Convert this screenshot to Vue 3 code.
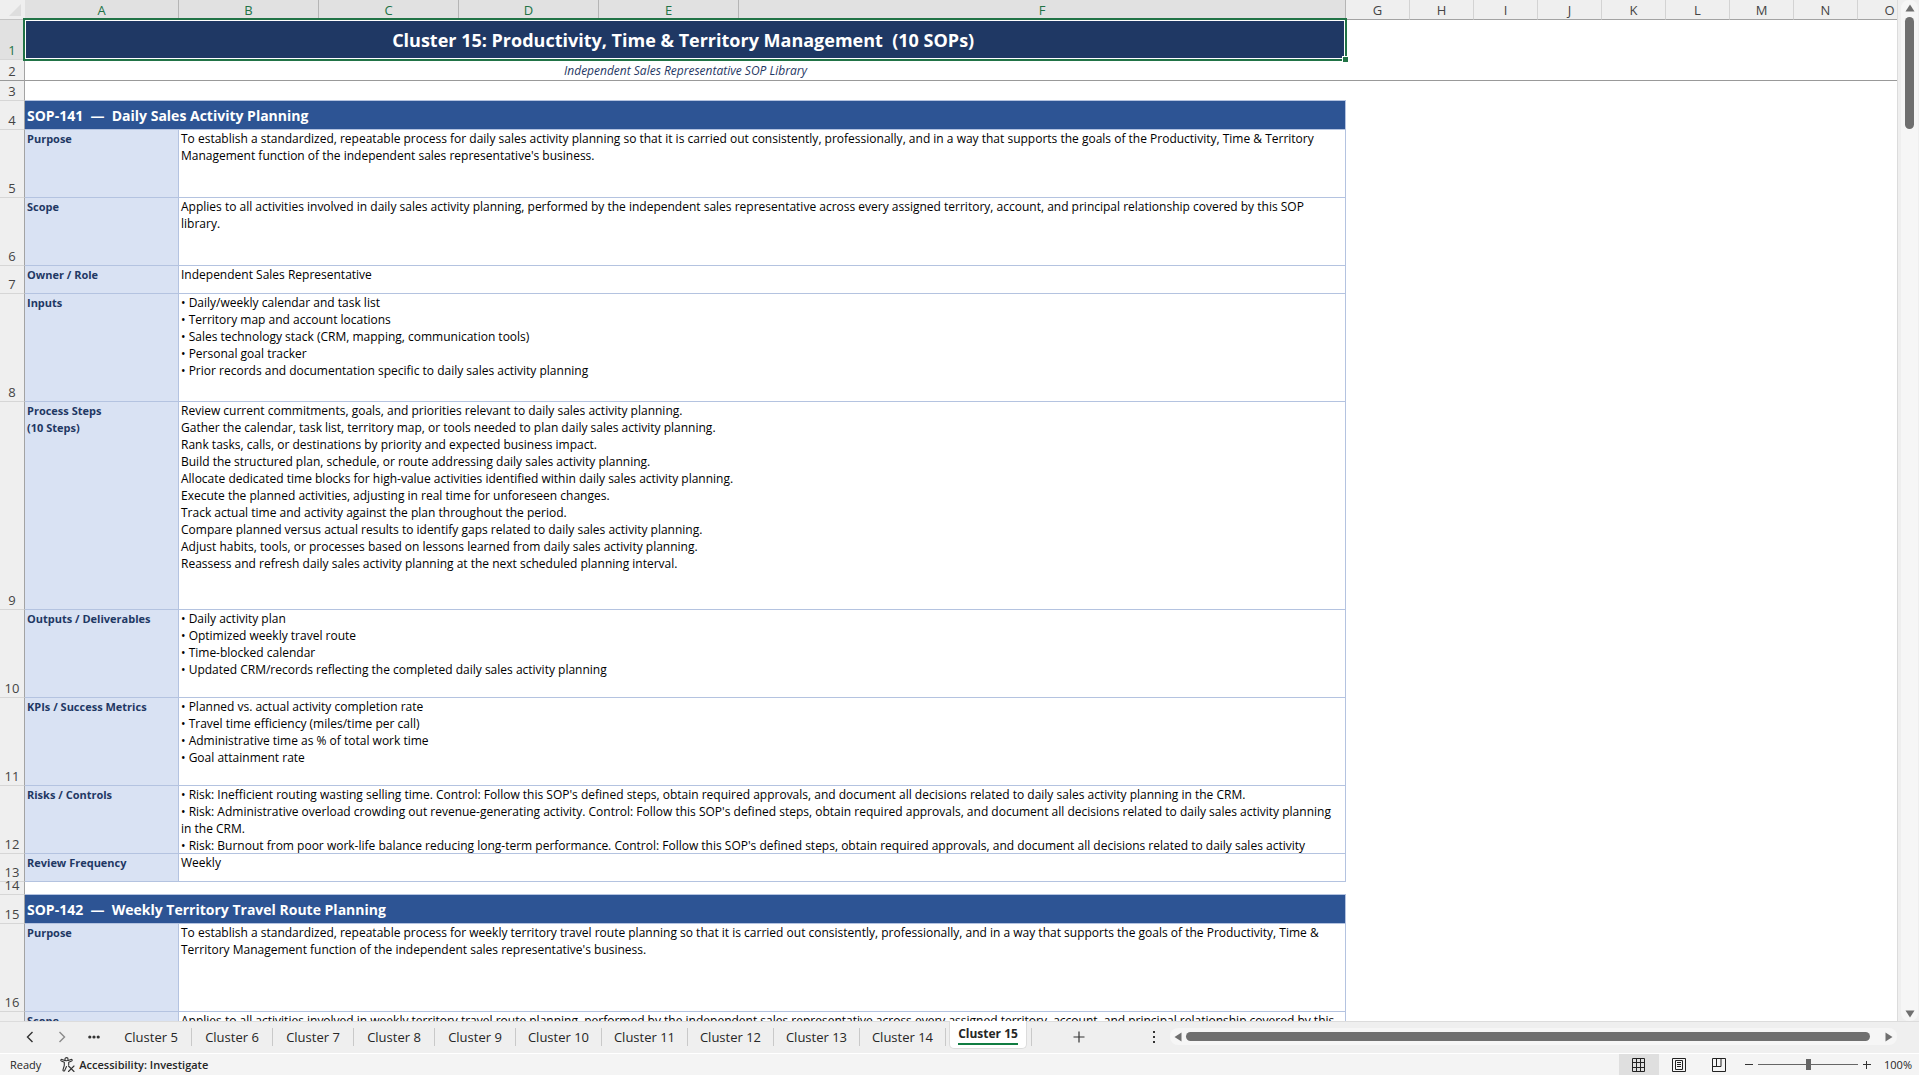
<script setup>
import { ref } from 'vue'

const selectedColumns = ['A', 'B', 'C', 'D', 'E', 'F']
const otherColumns = ['G', 'H', 'I', 'J', 'K', 'L', 'M', 'N', 'O']

const rows = [
  { n: 1, h: 40, kind: 'title', text: 'Cluster 15: Productivity, Time & Territory Management  (10 SOPs)' },
  { n: 2, h: 21, kind: 'subtitle', text: 'Independent Sales Representative SOP Library' },
  { n: 3, h: 20, kind: 'blank' },
  { n: 4, h: 29, kind: 'section', text: 'SOP-141  —  Daily Sales Activity Planning' },
  {
    n: 5, h: 68, kind: 'field', label: 'Purpose', lines: [
      'To establish a standardized, repeatable process for daily sales activity planning so that it is carried out consistently, professionally, and in a way that supports the goals of the Productivity, Time & Territory',
      "Management function of the independent sales representative's business.",
    ],
  },
  {
    n: 6, h: 68, kind: 'field', label: 'Scope', lines: [
      'Applies to all activities involved in daily sales activity planning, performed by the independent sales representative across every assigned territory, account, and principal relationship covered by this SOP',
      'library.',
    ],
  },
  { n: 7, h: 28, kind: 'field', label: 'Owner / Role', lines: ['Independent Sales Representative'] },
  {
    n: 8, h: 108, kind: 'field', label: 'Inputs', lines: [
      '• Daily/weekly calendar and task list',
      '• Territory map and account locations',
      '• Sales technology stack (CRM, mapping, communication tools)',
      '• Personal goal tracker',
      '• Prior records and documentation specific to daily sales activity planning',
    ],
  },
  {
    n: 9, h: 208, kind: 'field', label: 'Process Steps\n(10 Steps)', lines: [
      'Review current commitments, goals, and priorities relevant to daily sales activity planning.',
      'Gather the calendar, task list, territory map, or tools needed to plan daily sales activity planning.',
      'Rank tasks, calls, or destinations by priority and expected business impact.',
      'Build the structured plan, schedule, or route addressing daily sales activity planning.',
      'Allocate dedicated time blocks for high-value activities identified within daily sales activity planning.',
      'Execute the planned activities, adjusting in real time for unforeseen changes.',
      'Track actual time and activity against the plan throughout the period.',
      'Compare planned versus actual results to identify gaps related to daily sales activity planning.',
      'Adjust habits, tools, or processes based on lessons learned from daily sales activity planning.',
      'Reassess and refresh daily sales activity planning at the next scheduled planning interval.',
    ],
  },
  {
    n: 10, h: 88, kind: 'field', label: 'Outputs / Deliverables', lines: [
      '• Daily activity plan',
      '• Optimized weekly travel route',
      '• Time-blocked calendar',
      '• Updated CRM/records reflecting the completed daily sales activity planning',
    ],
  },
  {
    n: 11, h: 88, kind: 'field', label: 'KPIs / Success Metrics', lines: [
      '• Planned vs. actual activity completion rate',
      '• Travel time efficiency (miles/time per call)',
      '• Administrative time as % of total work time',
      '• Goal attainment rate',
    ],
  },
  {
    n: 12, h: 68, kind: 'field', label: 'Risks / Controls', lines: [
      "• Risk: Inefficient routing wasting selling time. Control: Follow this SOP's defined steps, obtain required approvals, and document all decisions related to daily sales activity planning in the CRM.",
      "• Risk: Administrative overload crowding out revenue-generating activity. Control: Follow this SOP's defined steps, obtain required approvals, and document all decisions related to daily sales activity planning",
      'in the CRM.',
      "• Risk: Burnout from poor work-life balance reducing long-term performance. Control: Follow this SOP's defined steps, obtain required approvals, and document all decisions related to daily sales activity",
    ],
  },
  { n: 13, h: 28, kind: 'field', label: 'Review Frequency', lines: ['Weekly'] },
  { n: 14, h: 13, kind: 'blank' },
  { n: 15, h: 29, kind: 'section', text: 'SOP-142  —  Weekly Territory Travel Route Planning' },
  {
    n: 16, h: 88, kind: 'field', label: 'Purpose', lines: [
      'To establish a standardized, repeatable process for weekly territory travel route planning so that it is carried out consistently, professionally, and in a way that supports the goals of the Productivity, Time &',
      "Territory Management function of the independent sales representative's business.",
    ],
  },
  {
    n: 17, h: 68, kind: 'field', label: 'Scope', lines: [
      'Applies to all activities involved in weekly territory travel route planning, performed by the independent sales representative across every assigned territory, account, and principal relationship covered by this',
    ],
  },
]

const tabs = [5, 6, 7, 8, 9, 10, 11, 12, 13, 14, 15]
const activeTab = ref(15)
const zoom = ref(100)
</script>

<template>
  <div class="app">
    <main class="workspace">
      <div class="sheet">
        <table class="grid">
          <colgroup>
            <col class="w-head" />
            <col class="w-a" />
            <col v-for="c in 4" :key="c" class="w-mid" />
            <col class="w-f" />
            <col v-for="c in otherColumns" :key="c" class="w-std" />
            <col />
          </colgroup>
          <thead>
            <tr>
              <th class="corner"><svg width="25" height="19" viewBox="0 0 25 19"><path d="M21 4v12H9z" fill="#dedede" /></svg></th>
              <th v-for="c in selectedColumns" :key="c" class="col-head selected" scope="col">{{ c }}</th>
              <th v-for="c in otherColumns" :key="c" class="col-head" scope="col">{{ c }}</th>
              <th class="col-head"></th>
            </tr>
          </thead>
          <tbody>
            <tr v-for="row in rows" :key="row.n" :class="row.kind">
              <th class="row-head" :class="{ selected: row.n === 1 }" scope="row">
                <div class="row-number" :style="{ height: row.h - 1 + 'px' }">{{ row.n }}</div>
              </th>
              <template v-if="row.kind === 'field'">
                <td class="label"><div class="content" :style="{ height: row.h - 1 + 'px' }">{{ row.label }}</div></td>
                <td class="value" colspan="5"><div class="content" :style="{ height: row.h - 1 + 'px' }">{{ row.lines.join('\n') }}</div></td>
              </template>
              <td v-else class="merged" colspan="6">
                {{ row.text }}
                <div v-if="row.n === 1" class="selection"><i class="handle"></i></div>
              </td>
              <td class="empty" colspan="10"></td>
            </tr>
          </tbody>
        </table>
      </div>
      <div class="v-gutter">
        <div class="v-track">
          <svg width="10" height="8" viewBox="0 0 10 8"><path d="M5 .5 9.500 7.500H.5z" fill="#6f6f6f" /></svg>
          <div class="v-thumb"></div>
          <svg class="end" width="10" height="8" viewBox="0 0 10 8"><path d="M5 7.500 9.500.5H.5z" fill="#6f6f6f" /></svg>
        </div>
      </div>
    </main>

    <nav class="tab-bar">
      <div class="tab-nav">
        <button type="button" aria-label="Previous sheets"><svg width="12" height="12" viewBox="0 0 12 12"><path d="M8.500 1 3.500 6l5 5" fill="none" stroke="#333" stroke-width="1.400" /></svg></button>
        <button type="button" aria-label="Next sheets"><svg width="12" height="12" viewBox="0 0 12 12"><path d="M3.500 1l5 5-5 5" fill="none" stroke="#8a8a8a" stroke-width="1.400" /></svg></button>
        <button type="button" aria-label="All sheets"><svg width="12" height="12" viewBox="0 0 12 12" fill="#333"><circle cx="1.800" cy="6" r="1.600" /><circle cx="6" cy="6" r="1.600" /><circle cx="10.200" cy="6" r="1.600" /></svg></button>
      </div>
      <button
        v-for="t in tabs"
        :key="t"
        type="button"
        class="tab"
        :class="{ wide: t > 9, active: t === activeTab }"
        @click="activeTab = t"
      ><span>Cluster {{ t }}</span></button>
      <button type="button" class="add" aria-label="New sheet"><svg width="12" height="12" viewBox="0 0 12 12"><path d="M6 .5v11M.5 6h11" stroke="#333" stroke-width="1.200" /></svg></button>
      <svg class="grip" width="4" height="12" viewBox="0 0 4 12" fill="#333"><path d="M1 0h2v2H1zM1 5h2v2H1zM1 10h2v2H1z" /></svg>
      <div class="h-track">
        <svg width="8" height="10" viewBox="0 0 8 10"><path d="M.5 5 7.500.5v9z" fill="#6f6f6f" /></svg>
        <div class="h-thumb"></div>
        <svg width="8" height="10" viewBox="0 0 8 10"><path d="M7.500 5 .5.5v9z" fill="#6f6f6f" /></svg>
      </div>
    </nav>

    <footer class="status">
      <span class="ready">Ready</span>
      <button type="button" class="access">
        <svg width="15" height="15" viewBox="0 0 15 15" fill="none" stroke="#333" stroke-width="1.100" stroke-linecap="round" stroke-linejoin="round">
          <circle cx="6.500" cy="2.200" r="1.600" />
          <path d="M4.800 3.500 2 2.400C.8 2 .4 3.500 1.400 4l2.900 1.300v3L3 12.800c-.3 1.200 1.200 1.700 1.700.6L6.500 9.500M8.200 3.500 11 2.400c1.200-.4 1.600 1.100.6 1.600L8.700 5.300v2.500M8.500 9l5.500 5.500M14 9l-5.500 5.500" />
        </svg>
        <span>Accessibility: Investigate</span>
      </button>
      <div class="views">
        <button type="button" class="current" aria-label="Normal view"><svg width="14" height="14" viewBox="0 0 14 14" fill="none" stroke="#222" stroke-width="1"><path d="M.5.5h12v13H.5zM4.500.5v13M8.500.5v13M.5 4.500h12M.5 9.500h12" /></svg></button>
        <button type="button" aria-label="Page layout view"><svg width="14" height="14" viewBox="0 0 14 14" fill="none" stroke="#222" stroke-width="1"><path d="M.5.5h13v13H.5zM3.500 2.500h7v9h-7zM5 4.500h4M5 6.500h4M5 8.500h4" /></svg></button>
        <button type="button" aria-label="Page break view"><svg width="14" height="14" viewBox="0 0 14 14" fill="none" stroke="#222" stroke-width="1"><path d="M.5.5h13v13H.5zM.5 8.500h8.500V.5M4.500.5v8" /></svg></button>
      </div>
      <div class="zoom">
        <button type="button" aria-label="Zoom out"><svg width="10" height="10" viewBox="0 0 10 10"><path d="M1 4.500h8" stroke="#333" /></svg></button>
        <input v-model="zoom" type="range" min="10" max="190" aria-label="Zoom level" />
        <button type="button" aria-label="Zoom in"><svg width="10" height="10" viewBox="0 0 10 10"><path d="M1 4.500h8M4.500 1v8" stroke="#333" /></svg></button>
        <span class="percent">{{ zoom }}%</span>
      </div>
    </footer>
  </div>
</template>

<style>
body {
  margin: 0;
}
</style>

<style scoped>
.app {
  display: flex;
  flex-direction: column;
  height: 100vh;
  overflow: hidden;
  background: #efefef;
  color: #262626;
  font-family: "Open Sans", "Noto Sans", sans-serif;
}
button {
  display: flex;
  align-items: center;
  justify-content: center;
  padding: 0;
  border: 0;
  background: none;
  color: inherit;
  font: inherit;
}
svg {
  display: block;
  flex: none;
}

/* Worksheet */
.workspace {
  display: flex;
  flex: 1;
  min-height: 0;
}
.sheet {
  flex: 1;
  min-width: 0;
  overflow: hidden;
  background: #fff;
}
.grid {
  width: 100%;
  table-layout: fixed;
  border-collapse: separate;
  border-spacing: 0;
  font-size: 12px;
  line-height: 17px;
  color: #000;
}
.w-head { width: 25px; }
.w-a { width: 154px; }
.w-mid { width: 140px; }
.w-f { width: 607px; }
.w-std { width: 64px; }
th,
td {
  box-sizing: border-box;
  padding: 0;
  font-weight: 400;
}
.corner,
.col-head {
  height: 20px;
  background: #efefef;
  border-bottom: 1px solid #a3a3a3;
  color: #444;
}
.corner {
  border-bottom-color: #c4c4c4;
}
.col-head {
  padding-top: 2px;
  border-right: 1px solid #d3d3d3;
  font-size: 13px;
}
.col-head.selected {
  background: #e1e1e1;
  border-right-color: #b5b5b5;
  color: #217346;
}
.row-head {
  background: #efefef;
  border-right: 1px solid #a3a3a3;
  border-bottom: 1px solid #d6d6d6;
  color: #444;
  font-size: 13px;
  line-height: 12px;
}
.row-head.selected {
  background: #e1e1e1;
  color: #217346;
}
.row-number {
  box-sizing: border-box;
  display: flex;
  align-items: flex-end;
  justify-content: center;
  padding-bottom: 3px;
}
.content {
  overflow: hidden;
  padding-left: 2px;
  white-space: pre;
}
.label {
  background: #d9e2f3;
  border-right: 1px solid #b4c3e0;
  border-bottom: 1px solid #b4c3e0;
  color: #1f3864;
  font-size: 11px;
}
.label .content {
  font-weight: 700;
}
.value {
  border-right: 1px solid #b4c3e0;
  border-bottom: 1px solid #b4c3e0;
}
.title .merged {
  position: relative;
  background: #1f3864;
  color: #fff;
  font-size: 18px;
  font-weight: 700;
  line-height: 24px;
  text-align: center;
  white-space: pre;
}
.subtitle .merged {
  color: #1f3864;
  font-style: italic;
  text-align: center;
}
.subtitle > * {
  border-bottom: 1px solid #999;
}
.blank .merged {
  border-bottom: 1px solid #b4c3e0;
}
.section .merged {
  padding-left: 2px;
  background: #2d5494;
  border-right: 1px solid #b4c3e0;
  border-bottom: 1px solid #b4c3e0;
  color: #fff;
  font-size: 14px;
  font-weight: 700;
  white-space: pre;
}
.selection {
  position: absolute;
  z-index: 1;
  inset: -2px -1px -1px -2px;
  border: 2px solid #217346;
  box-shadow: inset 0 0 0 1px #fff;
}
.handle {
  position: absolute;
  right: -3px;
  bottom: -3px;
  width: 5px;
  height: 5px;
  background: #217346;
  outline: 1px solid #fff;
}

/* Scrollbars */
.v-gutter {
  box-sizing: border-box;
  display: flex;
  width: 22px;
  padding-left: 3px;
  border-left: 1px solid #dcdcdc;
}
.v-track {
  display: flex;
  flex-direction: column;
  align-items: center;
  gap: 5px;
  width: 17px;
  padding: 4px 0 3px;
  border-radius: 8px;
  background: #f6f6f6;
}
.v-thumb {
  width: 9px;
  height: 112px;
  border-radius: 5px;
  background: #6f6f6f;
}
.end {
  margin-top: auto;
}
.h-track {
  display: flex;
  flex: 1;
  align-items: center;
  gap: 4px;
  height: 17px;
  margin-right: 22px;
  padding: 0 4px;
  border-radius: 8px;
  background: #f6f6f6;
}
.h-thumb {
  flex: 1;
  height: 9px;
  margin-right: 11px;
  border-radius: 5px;
  background: #6f6f6f;
}

/* Sheet tabs */
.tab-bar {
  box-sizing: border-box;
  display: flex;
  align-items: center;
  height: 32px;
  padding-bottom: 2px;
  border-top: 1px solid #dcdcdc;
  font-size: 13px;
  line-height: 18px;
}
.tab-nav {
  display: flex;
  justify-content: space-between;
  width: 76px;
  margin: 0 11px 0 24px;
}
.tab {
  flex: none;
  box-sizing: border-box;
  width: 81px;
  height: 18px;
  border-right: 1px solid #c9c9c9;
}
.tab.wide {
  width: 86px;
}
.tab.active {
  align-self: flex-start;
  width: 78px;
  height: 28px;
  margin: -1px 4px 0 3px;
  padding-top: 1px;
  border: 1px solid #dcdcdc;
  border-top: 0;
  border-radius: 0 0 5px 5px;
  background: #fff;
  font-weight: 700;
  font-size: 12px;
}
.tab.active span {
  border-bottom: 2px solid #107c41;
}
.add {
  width: 30px;
  height: 18px;
  padding: 0 32px;
  box-sizing: content-box;
  border-left: 1px solid #c9c9c9;
}
.grip {
  margin: 0 14px 0 26px;
}

/* Status bar */
.status {
  box-sizing: border-box;
  display: flex;
  align-items: center;
  height: 22px;
  padding: 0 7px 0 10px;
  border-top: 1px solid #fff;
  background: #f4f4f4;
  font-size: 11px;
  line-height: 16px;
}
.access {
  gap: 4px;
  margin-left: 19px;
  font-weight: 600;
}
.views {
  display: flex;
  align-self: stretch;
  margin-left: auto;
}
.views button {
  width: 40px;
}
.views .current {
  background: #dfdfdf;
}
.zoom {
  display: flex;
  align-items: center;
  margin-left: 5px;
}
.zoom input {
  appearance: none;
  width: 100px;
  height: 12px;
  margin: 0 4px;
  background: linear-gradient(#666, #666) center / 100% 1px no-repeat;
}
.zoom input::-webkit-slider-thumb {
  appearance: none;
  width: 5px;
  height: 11px;
  background: #666;
}
.percent {
  margin-left: 12px;
}
</style>
